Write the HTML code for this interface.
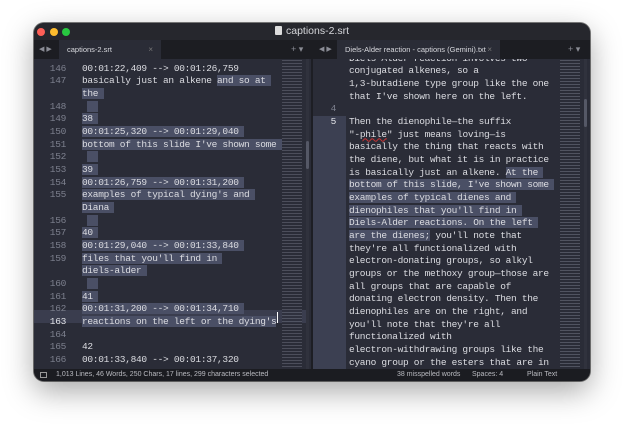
<!DOCTYPE html>
<html><head><meta charset="utf-8"><style>
*{margin:0;padding:0;box-sizing:border-box}
body{width:624px;height:426px;background:#fff;position:relative;overflow:hidden;font-family:"Liberation Sans",sans-serif}
.win{position:absolute;left:34px;top:23px;width:556px;height:358px;border-radius:10px;background:#1d1e24;overflow:hidden;box-shadow:0 10px 30px rgba(0,0,0,.35),0 0 0 1px rgba(0,0,0,.5)}
.title{position:absolute;left:0;top:0;width:556px;height:17px;background:#26272d;color:#d6d7db;font-size:10.5px;text-align:center;line-height:17px}
.dot{position:absolute;top:5px;width:8px;height:8px;border-radius:50%}
.tabs{position:absolute;top:17px;height:19px;background:#1c1d22;width:556px}
.tab{position:absolute;top:0;height:19px;background:#2a2c36;color:#d8d9de;font-size:7.5px;line-height:19px;padding-left:8px}
.tab .x{position:absolute;right:8px;color:#777;font-size:8px}
.arr{position:absolute;top:0;font-size:7px;color:#8a8c95;line-height:19px}
.pane{position:absolute;top:36px;height:310px;background:#2a2c37;overflow:hidden}
.row{position:absolute;height:12.67px;line-height:12.67px;font-family:"Liberation Mono",monospace;font-size:9.5px;letter-spacing:-0.3px;color:#dcdde2;white-space:pre}
.ln{position:absolute;height:12.67px;line-height:12.67px;font-family:"Liberation Mono",monospace;font-size:9.5px;letter-spacing:-0.3px;color:#7d808e;text-align:right;white-space:pre}
.s{background:#4a4f65}
.mini{position:absolute;top:0;height:310px;background:repeating-linear-gradient(#2a2c37 0 1px,#5a5d6a 1px 2px,#2a2c37 2px 3px)}
.status{position:absolute;top:346px;left:0;width:556px;height:12px;background:#1b1c21;color:#b9bac0;font-size:7px;line-height:12px}
</style></head><body>
<div class="win">
 <div class="title"><span style="display:inline-block;width:7px;height:9px;background:#ddd;vertical-align:-1px;margin-right:4px;border-radius:1px"></span>captions-2.srt</div>
 <div class="dot" style="left:3px;background:#fe5f57"></div>
 <div class="dot" style="left:16px;background:#febc2e"></div>
 <div class="dot" style="left:28px;background:#28c840"></div>
 <div class="tabs">
  <div class="arr" style="left:5px">◀ ▶</div>
  <div class="tab" style="left:25px;width:102px">captions-2.srt<span class="x">×</span></div>
  <div class="arr" style="left:257px;font-size:9px">+ ▾</div>
  <div class="arr" style="left:285px">◀ ▶</div>
  <div class="tab" style="left:303px;width:163px">Diels-Alder reaction - captions (Gemini).txt<span class="x">×</span></div>
  <div class="arr" style="left:534px;font-size:9px">+ ▾</div>
 </div>
 <div class="pane" style="left:0;width:277px" id="L">
  <div style="position:absolute;left:0;top:251.3px;width:272px;height:12.67px;background:#3a3d4e"></div>
  <div class="mini" style="left:248px;width:20px;opacity:.7"></div>
  <div style="position:absolute;left:272px;top:0;width:3px;height:310px;background:#30323d"></div>
  <div style="position:absolute;left:272px;top:82px;width:3px;height:28px;background:#555866;border-radius:2px"></div>
 </div>
 <div style="position:absolute;left:277px;top:36px;width:2px;height:310px;background:#1d1e24"></div>
 <div class="pane" style="left:279px;width:277px" id="R">
  <div style="position:absolute;left:0;top:57px;width:33px;height:260px;background:#3c4052"></div>
  <div class="mini" style="left:247px;width:20px;opacity:.8"></div>
  <div style="position:absolute;left:271px;top:0;width:3px;height:310px;background:#30323d"></div>
  <div style="position:absolute;left:271px;top:40px;width:3px;height:28px;background:#555866;border-radius:2px"></div>
 </div>
 <div class="status">
  <span style="position:absolute;left:6px;top:3px;width:7px;height:6px;border:1px solid #999"></span>
  <span style="position:absolute;left:22px">1,013 Lines, 46 Words, 250 Chars, 17 lines, 299 characters selected</span>
  <span style="position:absolute;left:363px">38 misspelled words</span>
  <span style="position:absolute;left:438px">Spaces: 4</span>
  <span style="position:absolute;left:493px">Plain Text</span>
 </div>
</div>
<script>
var L=[["37","37",0],["146","00:01:22,409 --> 00:01:26,759",0],["147","basically just an alkene |and so at ",1],["","the ",2],["148"," ",3],["149","38 ",2],["150","00:01:25,320 --> 00:01:29,040 ",2],["151","bottom of this slide I've shown some ",2],["152"," ",3],["153","39 ",2],["154","00:01:26,759 --> 00:01:31,200 ",2],["155","examples of typical dying's and ",2],["","Diana ",2],["156"," ",3],["157","40 ",2],["158","00:01:29,040 --> 00:01:33,840 ",2],["159","files that you'll find in ",2],["","diels-alder ",2],["160"," ",3],["161","41 ",2],["162","00:01:31,200 --> 00:01:34,710 ",2],["163","reactions on the left or the dying's",2],["164","",0],["165","42",0],["166","00:01:33,840 --> 00:01:37,320",0]];
var h="";
L.forEach(function(r,i){var t=-12.67+i*12.67+3.7;
h+='<div class="ln" style="left:0;width:32px;top:'+t+'px;'+(r[0]=="163"?'color:#e4e5ea':'')+'">'+r[0]+'</div>';
var x=r[1],c;
if(r[2]==0)c=x;else if(r[2]==1){var p=x.split("|");c=p[0]+'<span class="s">'+p[1]+'</span>';}
else if(r[2]==3)c=' <span class="s">  </span>';else c='<span class="s">'+x+'</span>';
h+='<div class="row" style="left:48px;top:'+t+'px">'+c+'</div>';});
document.getElementById("L").insertAdjacentHTML("beforeend",h+'<div style="position:absolute;left:243px;top:253px;width:1px;height:11px;background:#fff"></div>');
var R=["Diels-Alder reaction involves two","conjugated alkenes, so a","1,3-butadiene type group like the one","that I've shown here on the left.","","Then the dienophile—the suffix","\"-phile\" just means loving—is","basically the thing that reacts with","the diene, but what it is in practice","is basically just an alkene. |At the ","|bottom of this slide, I've shown some ","|examples of typical dienes and ","|dienophiles that you'll find in ","|Diels-Alder reactions. On the left ","|are the dienes;| you'll note that","they're all functionalized with","electron-donating groups, so alkyl","groups or the methoxy group—those are","all groups that are capable of","donating electron density. Then the","dienophiles are on the right, and","you'll note that they're all","functionalized with","electron-withdrawing groups like the","cyano group or the esters that are in"];
h="";
R.forEach(function(x,i){var t=-6.3+i*12.67;var p=x.split("|");var c=p.length>1?p[0]+'<span class="s">'+p[1]+'</span>'+(p[2]||""):x;
c=c.replace('"-phile"','"-<span style="text-decoration:underline wavy #c33">phile</span>"');
h+='<div class="row" style="left:36px;top:'+t+'px">'+c+'</div>';});
h+='<div class="ln" style="left:0;width:23px;top:44.4px">4</div><div class="ln" style="left:0;width:23px;top:57px;color:#e4e5ea">5</div>';
document.getElementById("R").insertAdjacentHTML("beforeend",h);
</script>
</body></html>
